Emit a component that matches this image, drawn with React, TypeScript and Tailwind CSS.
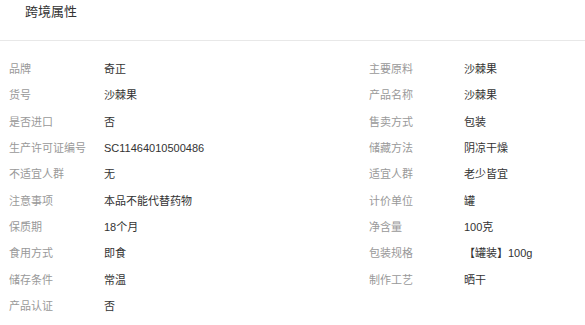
const rows: [string, string, string?, string?][] = [
  ["品牌", "奇正", "主要原料", "沙棘果"],
  ["货号", "沙棘果", "产品名称", "沙棘果"],
  ["是否进口", "否", "售卖方式", "包装"],
  ["生产许可证编号", "SC11464010500486", "储藏方法", "阴凉干燥"],
  ["不适宜人群", "无", "适宜人群", "老少皆宜"],
  ["注意事项", "本品不能代替药物", "计价单位", "罐"],
  ["保质期", "18个月", "净含量", "100克"],
  ["食用方式", "即食", "包装规格", "【罐装】100g"],
  ["储存条件", "常温", "制作工艺", "晒干"],
  ["产品认证", "否"],
];

const Cell = ({ label, value }: { label?: string; value?: string }) => (
  <div className="flex items-center">
    <span className="w-[95px] shrink-0 text-[#999]">{label}</span>
    <span className="text-[#333]">{value}</span>
  </div>
);

export default function App() {
  return (
    <div
      className="h-[325px] w-[585px] bg-white"
      style={{ fontFamily: '"Liberation Sans", "Noto Sans CJK SC", sans-serif' }}
    >
      <div className="h-[41px] border-b border-[#e8e8e8] pl-[25px] pt-[2px] text-[13px] leading-[20px] text-[#333]">
        跨境属性
      </div>
      <div className="pl-[9px] pt-[15px] text-[11px]">
        {rows.map(([l1, v1, l2, v2]) => (
          <div key={l1} className="grid h-[26.33px] grid-cols-[360px_1fr]">
            <Cell label={l1} value={v1} />
            {l2 ? <Cell label={l2} value={v2} /> : <div />}
          </div>
        ))}
      </div>
    </div>
  );
}
